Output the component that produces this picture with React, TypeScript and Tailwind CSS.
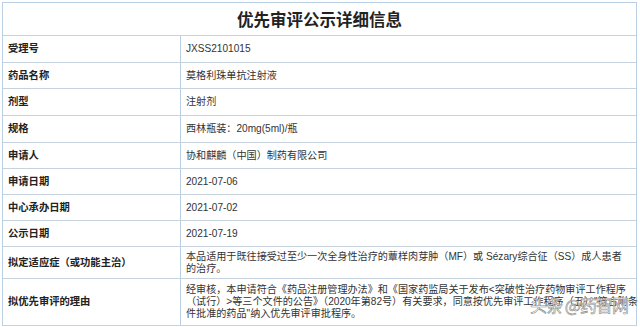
const rows: { label: string; value: React.ReactNode; h: string }[] = [
  { label: "受理号", value: "JXSS2101015", h: "h-[27px]" },
  { label: "药品名称", value: "莫格利珠单抗注射液", h: "h-[26px]" },
  { label: "剂型", value: "注射剂", h: "h-[27px]" },
  { label: "规格", value: "西林瓶装：20mg(5ml)/瓶", h: "h-[27px]" },
  { label: "申请人", value: "协和麒麟（中国）制药有限公司", h: "h-[26px]" },
  { label: "申请日期", value: "2021-07-06", h: "h-[26px]" },
  { label: "中心承办日期", value: "2021-07-02", h: "h-[26px]" },
  { label: "公示日期", value: "2021-07-19", h: "h-[26px]" },
  {
    label: "拟定适应症（或功能主治）",
    value: (
      <>
        本品适用于既往接受过至少一次全身性治疗的蕈样肉芽肿（MF）或 Sézary综合征（SS）成人患者
        <br />
        的治疗。
      </>
    ),
    h: "h-[32px]",
  },
  {
    label: "拟优先审评的理由",
    value: (
      <>
        经审核，本申请符合《药品注册管理办法》和《国家药监局关于发布&lt;突破性治疗药物审评工作程序
        <br />
        （试行）&gt;等三个文件的公告》（2020年第82号）有关要求，同意按优先审评工作程序（五）"符合附条
        <br />
        件批准的药品"纳入优先审评审批程序。
      </>
    ),
    h: "h-[47px]",
  },
];

export default function App() {
  return (
    <div className="relative w-[640px] h-[327px] bg-white pt-[2px] pl-[2px] overflow-hidden font-['Liberation_Sans','Noto_Sans_CJK_SC',sans-serif]">
      <div className="w-[635px] border-t border-l border-r border-[#b9cfe4]">
        <div className="h-[33px] border-b border-[#c6d2de] flex items-center justify-center">
          <h1 className="font-['Noto_Sans_CJK_SC',serif] text-[16.5px] font-bold text-[#222]">
            优先审评公示详细信息
          </h1>
        </div>
        {rows.map((row) => (
          <div key={row.label} className={`${row.h} flex border-b border-[#c6d2de]`}>
            <div className="w-[178px] shrink-0 border-r border-[#b9cfe4] pl-[5px] flex items-center text-[10.3px] font-bold text-[#222]">
              {row.label}
            </div>
            <div className="flex-1 min-w-0 pl-[5px] flex items-center text-[10.1px] leading-[12px] text-[#333] whitespace-nowrap">
              <div>{row.value}</div>
            </div>
          </div>
        ))}
      </div>
      <div className="absolute left-[530px] top-[295px] text-[17px] leading-[20px] tracking-[-1px] font-['Noto_Sans_CJK_SC',sans-serif] text-white/80 [-webkit-text-stroke:0.6px_#8a8a8a] whitespace-nowrap">
        头条 @药智网
      </div>
    </div>
  );
}
